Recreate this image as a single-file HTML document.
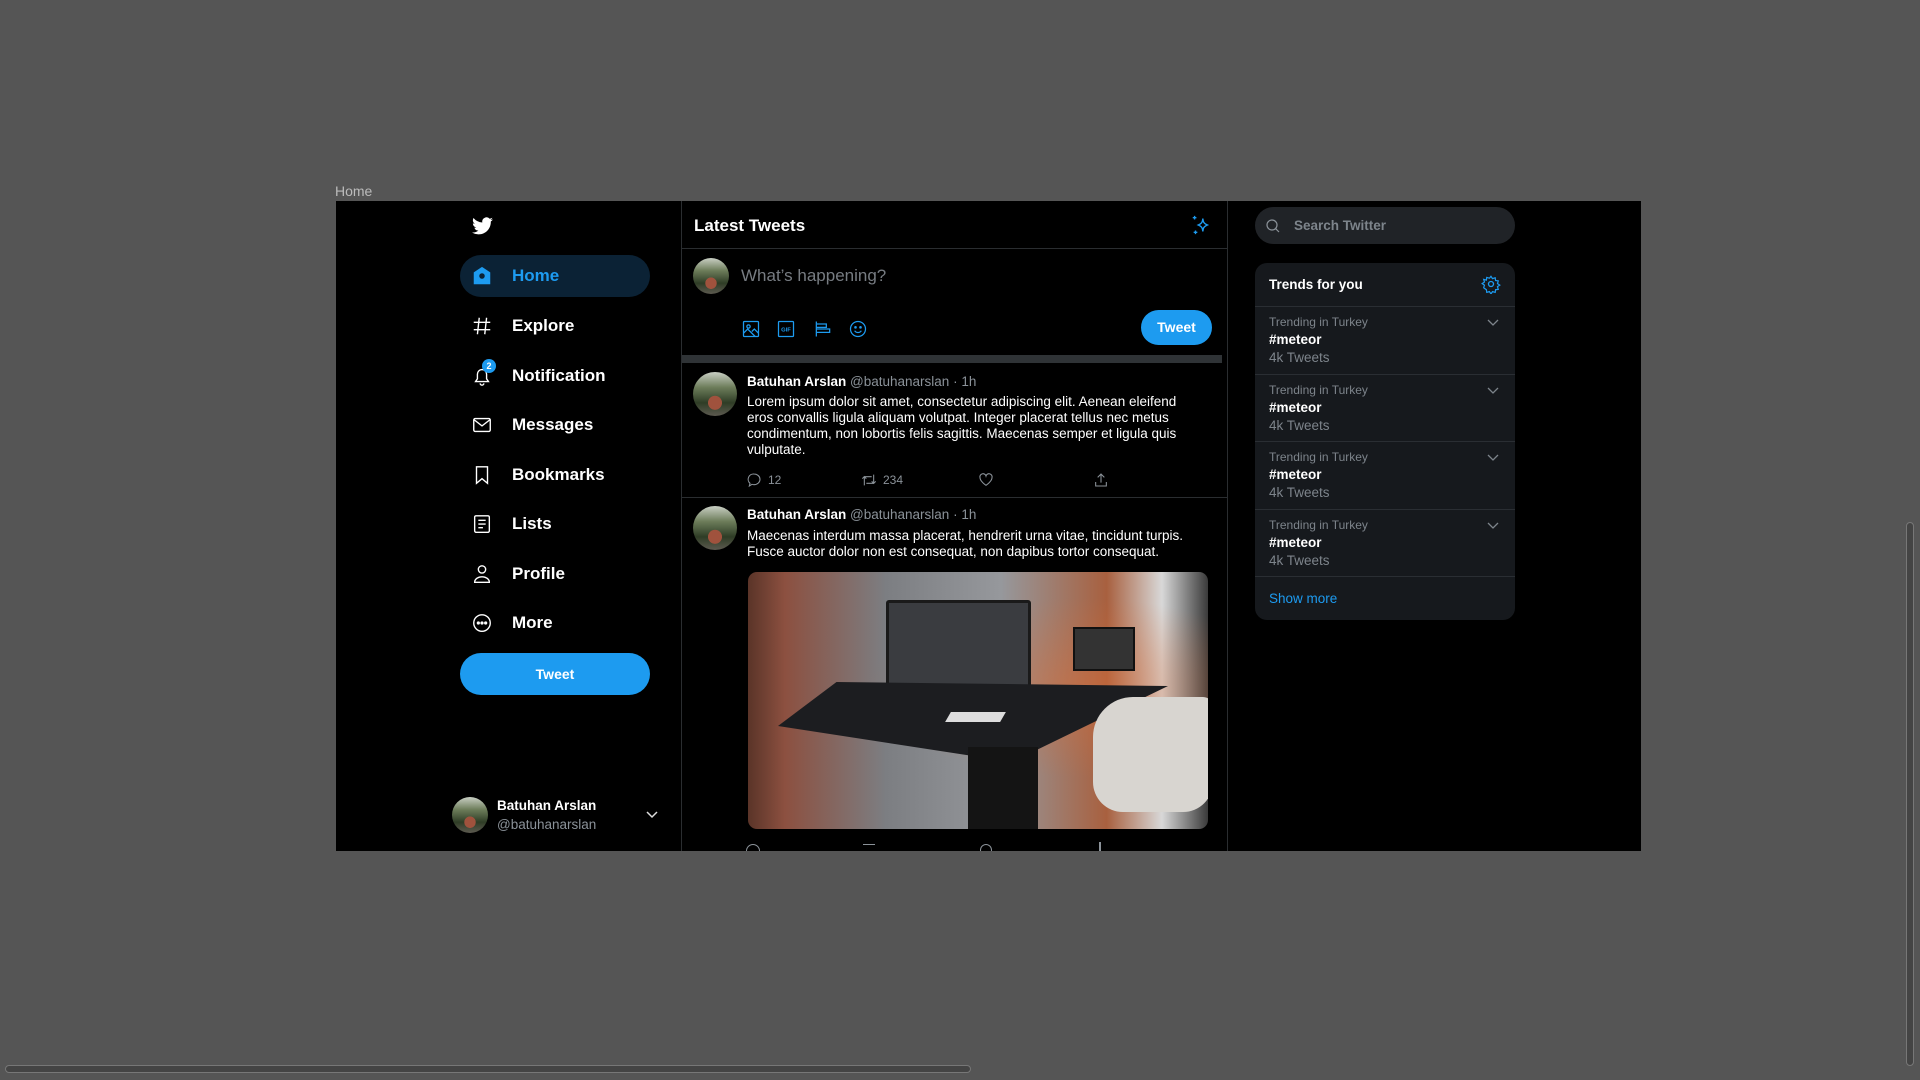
<!DOCTYPE html>
<html><head><meta charset="utf-8"><style>
*{box-sizing:border-box;margin:0;padding:0}
body{width:1920px;height:1080px;background:#555;font-family:"Liberation Sans",sans-serif;position:relative;overflow:hidden;color:#fff}
.abs{position:absolute}
.frame{left:336px;top:201px;width:1305px;height:650px;background:#000;overflow:hidden}
.nav{position:absolute;left:135px;height:40px;display:flex;align-items:center;font-weight:bold;font-size:17px}
.nav svg{position:absolute;left:0;width:22px;height:22px}
.nav span{position:absolute;left:41px;white-space:nowrap}
.av{border-radius:50%;background:radial-gradient(circle at 50% 70%,#a0523d 0 18%,transparent 19%),linear-gradient(#c9cfc4 0,#6d7d5a 35%,#2f3d26 70%,#5d5a50 100%)}
.gray{color:#8b9299}
.trend{position:absolute;left:0;width:260px;height:68px;border-top:1px solid #2a2e33}
.trend .a{position:absolute;left:14px;top:8px;font-size:12px;color:#7d848b}
.trend .b{position:absolute;left:14px;top:25px;font-size:13.5px;font-weight:bold}
.trend .c{position:absolute;left:14px;top:43px;font-size:13.5px;color:#7d848b}
.trend svg{position:absolute;right:16px;top:12px}
.act{position:absolute;font-size:12px;color:#8b9299;display:flex;align-items:center;gap:6px}
</style></head><body>
<div class="abs" style="left:335px;top:183px;font-size:14px;color:#bbb">Home</div>
<div class="abs frame">
 <div class="abs" style="left:345px;top:0;width:1px;height:650px;background:#2a2d30"></div>
 <svg class="abs" style="left:136px;top:16px" width="21" height="18" viewBox="0 0 24 20"><path fill="#fff" d="M24 2.4a9.8 9.8 0 0 1-2.8.8A4.9 4.9 0 0 0 23.3.5a9.9 9.9 0 0 1-3.1 1.2A4.9 4.9 0 0 0 11.8 6 14 14 0 0 1 1.7.9a4.9 4.9 0 0 0 1.5 6.6 4.9 4.9 0 0 1-2.2-.6 4.9 4.9 0 0 0 3.9 4.9 4.9 4.9 0 0 1-2.2.1 4.9 4.9 0 0 0 4.6 3.4A9.9 9.9 0 0 1 0 17.3 14 14 0 0 0 7.5 19.5c9 0 14-7.5 14-14v-.6A10 10 0 0 0 24 2.4z"/></svg>
 <div class="abs" style="left:124px;top:54px;width:190px;height:42px;border-radius:21px;background:#0b2235"></div>
 <div class="nav" style="top:55px;color:#1d9bf0"><svg viewBox="0 0 24 24"><path fill="#1d9bf0" d="M12 2 3 8v13h18V8z"/><circle cx="12" cy="12" r="3" fill="#0b2235"/></svg><span>Home</span></div>
 <div class="nav" style="top:105px"><svg viewBox="0 0 24 24" fill="none" stroke="#fff" stroke-width="1.5"><path d="M9 3 7 21M17 3l-2 18M3 8h18M3 16h18"/></svg><span>Explore</span></div>
 <div class="nav" style="top:155px"><svg viewBox="0 0 24 24" fill="none" stroke="#fff" stroke-width="1.5"><path d="M5 18h14l-2-3V10a5 5 0 0 0-10 0v5zM10 20a2 2 0 0 0 4 0"/></svg><span>Notification</span><div class="abs" style="left:11px;top:3px;width:14px;height:14px;border-radius:50%;background:#1d9bf0;font-size:9px;text-align:center;line-height:14px">2</div></div>
 <div class="nav" style="top:204px"><svg viewBox="0 0 24 24" fill="none" stroke="#fff" stroke-width="1.5"><rect x="3" y="5" width="18" height="14" rx="1.5"/><path d="m3 6 9 7 9-7"/></svg><span>Messages</span></div>
 <div class="nav" style="top:254px"><svg viewBox="0 0 24 24" fill="none" stroke="#fff" stroke-width="1.5"><path d="M6 3h12v18l-6-5-6 5z"/></svg><span>Bookmarks</span></div>
 <div class="nav" style="top:303px"><svg viewBox="0 0 24 24" fill="none" stroke="#fff" stroke-width="1.5"><rect x="4" y="3" width="16" height="18" rx="1.5"/><path d="M8 8h8M8 12h8M8 16h5"/></svg><span>Lists</span></div>
 <div class="nav" style="top:353px"><svg viewBox="0 0 24 24" fill="none" stroke="#fff" stroke-width="1.5"><circle cx="12" cy="7" r="4"/><path d="M4 21a8 6 0 0 1 16 0z"/></svg><span>Profile</span></div>
 <div class="nav" style="top:402px"><svg viewBox="0 0 24 24" fill="none" stroke="#fff" stroke-width="1.5"><circle cx="12" cy="12" r="9"/><circle cx="8" cy="12" r="1" fill="#fff"/><circle cx="12" cy="12" r="1" fill="#fff"/><circle cx="16" cy="12" r="1" fill="#fff"/></svg><span>More</span></div>
 <div class="abs" style="left:124px;top:452px;width:190px;height:42px;border-radius:21px;background:#1d9bf0;font-weight:bold;font-size:14px;text-align:center;line-height:42px">Tweet</div>
 <div class="abs av" style="left:116px;top:596px;width:36px;height:36px"></div>
 <div class="abs" style="left:161px;top:597px;font-size:13.5px;font-weight:bold">Batuhan Arslan</div>
 <div class="abs gray" style="left:161px;top:616px;font-size:13.5px">@batuhanarslan</div>
 <svg class="abs" style="left:310px;top:610px" width="12" height="8" viewBox="0 0 12 8"><path d="m1 1 5 5 5-5" fill="none" stroke="#ddd" stroke-width="1.5"/></svg>

 <div class="abs" style="left:891px;top:0;width:1px;height:650px;background:#2a2d30"></div>
 <div class="abs" style="left:358px;top:15px;font-size:17px;font-weight:bold">Latest Tweets</div>
 <svg class="abs" style="left:854px;top:12px" width="22" height="24" viewBox="0 0 24 24" fill="none" stroke="#1d9bf0" stroke-width="1.5"><path d="M14 5c.5 4.5 1.5 5.5 5 7-3.5 1.5-4.5 2.5-5 7-.5-4.5-1.5-5.5-5-7 3.5-1.5 4.5-2.5 5-7zM5 2v4M3 4h4M6 18v4M4 20h4"/></svg>
 <div class="abs" style="left:345px;top:47px;width:546px;height:1px;background:#2a2d30"></div>
 <div class="abs av" style="left:357px;top:57px;width:36px;height:36px"></div>
 <div class="abs" style="left:405px;top:65px;font-size:17px;color:#777c82">What’s happening?</div>
 <svg class="abs" style="left:405px;top:118px" width="20" height="20" viewBox="0 0 24 24" fill="none" stroke="#1d9bf0" stroke-width="1.5"><rect x="3" y="3" width="18" height="18" rx="1"/><circle cx="9" cy="9" r="2"/><path d="m3 17 5-5 9 9M13 15l3-3 5 5"/></svg>
 <svg class="abs" style="left:440px;top:118px" width="20" height="20" viewBox="0 0 24 24"><rect x="3" y="3" width="18" height="18" rx="1" fill="none" stroke="#1d9bf0" stroke-width="1.5"/><text x="12" y="15" text-anchor="middle" font-size="7" font-weight="bold" fill="#1d9bf0" font-family="Liberation Sans">GIF</text></svg>
 <svg class="abs" style="left:477px;top:118px" width="20" height="20" viewBox="0 0 24 24" fill="none" stroke="#1d9bf0" stroke-width="1.5"><path d="M4 3v18M4 6h12v4H4M4 12h16v4H4"/></svg>
 <svg class="abs" style="left:512px;top:118px" width="20" height="20" viewBox="0 0 24 24" fill="none" stroke="#1d9bf0" stroke-width="1.5"><circle cx="12" cy="12" r="9"/><circle cx="9" cy="10" r=".8" fill="#1d9bf0"/><circle cx="15" cy="10" r=".8" fill="#1d9bf0"/><path d="M8 14c2 3 6 3 8 0"/></svg>
 <div class="abs" style="left:805px;top:109px;width:71px;height:35px;border-radius:18px;background:#1d9bf0;font-weight:bold;font-size:14px;text-align:center;line-height:35px">Tweet</div>
 <div class="abs" style="left:346px;top:154px;width:540px;height:8px;background:#2f3336"></div>
 <div class="abs av" style="left:357px;top:171px;width:44px;height:44px"></div>
 <div class="abs" style="left:411px;top:173px;font-size:13.5px;white-space:nowrap"><b>Batuhan Arslan</b> <span class="gray">@batuhanarslan · 1h</span></div>
 <div class="abs" style="left:411px;top:193px;width:445px;font-size:13.5px;line-height:16px">Lorem ipsum dolor sit amet, consectetur adipiscing elit. Aenean eleifend eros convallis ligula aliquam volutpat. Integer placerat tellus nec metus condimentum, non lobortis felis sagittis. Maecenas semper et ligula quis vulputate.</div>
 <div class="act" style="left:410px;top:271px"><svg width="16" height="16" viewBox="0 0 24 24" fill="none" stroke="#8b9299" stroke-width="1.6"><path d="M12 3a9 8 0 0 1 0 16c-1 0-2 0-3-.5L5 21l1-4a8 8 0 0 1 6-14z"/></svg>12</div>
 <div class="act" style="left:525px;top:271px"><svg width="16" height="16" viewBox="0 0 24 24" fill="none" stroke="#8b9299" stroke-width="1.6"><path d="M5 20V7h11M2 10l3-3 3 3M19 4v13H8M22 14l-3 3-3-3"/></svg>234</div>
 <div class="act" style="left:642px;top:271px"><svg width="16" height="16" viewBox="0 0 24 24" fill="none" stroke="#8b9299" stroke-width="1.6"><path d="M12 20S3 14 3 8.5A4.5 4.5 0 0 1 12 6a4.5 4.5 0 0 1 9 2.5C21 14 12 20 12 20z"/></svg></div>
 <div class="act" style="left:757px;top:271px"><svg width="16" height="16" viewBox="0 0 24 24" fill="none" stroke="#8b9299" stroke-width="1.6"><path d="M12 3v13M7 8l5-5 5 5M4 15v6h16v-6"/></svg></div>
 <div class="abs" style="left:345px;top:296px;width:546px;height:1px;background:#2a2d30"></div>
 <div class="abs av" style="left:357px;top:305px;width:44px;height:44px"></div>
 <div class="abs" style="left:411px;top:306px;font-size:13.5px;white-space:nowrap"><b>Batuhan Arslan</b> <span class="gray">@batuhanarslan · 1h</span></div>
 <div class="abs" style="left:411px;top:327px;width:470px;font-size:13.5px;line-height:16px">Maecenas interdum massa placerat, hendrerit urna vitae, tincidunt turpis. Fusce auctor dolor non est consequat, non dapibus tortor consequat.</div>
 <div class="abs" style="left:412px;top:371px;width:460px;height:257px;border-radius:9px;overflow:hidden;background:linear-gradient(90deg,#5a3428 0,#8c5040 8%,#7c7e82 30%,#96989c 55%,#a8603f 78%,#d8d8d8 90%,#3a3a3a 100%)">
  <div class="abs" style="left:0;top:0;width:100%;height:100%;background:radial-gradient(ellipse at 72% 45%,rgba(220,110,55,.45),transparent 45%)"></div>
  <div class="abs" style="left:138px;top:28px;width:145px;height:100px;background:#3a3c40;border:3px solid #1a1a1a;border-radius:3px"></div>
  <div class="abs" style="left:325px;top:55px;width:62px;height:44px;background:#333;border:2px solid #111"></div>
  <div class="abs" style="left:30px;top:110px;width:390px;height:80px;background:#1c1d20;clip-path:polygon(15% 0,100% 5%,60% 100%,0 55%)"></div>
  <div class="abs" style="left:220px;top:175px;width:70px;height:82px;background:#141414"></div>
  <div class="abs" style="left:345px;top:125px;width:120px;height:115px;background:#d8d5d0;border-radius:40px 10px 30px 30px"></div>
  <div class="abs" style="left:200px;top:140px;width:55px;height:10px;background:#ddd;transform:skewX(-30deg)"></div>
 </div>
 <div class="abs" style="left:410px;top:643px;width:14px;height:14px;border:1.5px solid #8b9299;border-radius:50%"></div>
 <div class="abs" style="left:527px;top:643px;width:12px;height:12px;border-top:1.5px solid #8b9299"></div>
 <div class="abs" style="left:644px;top:643px;width:12px;height:12px;border:1.5px solid #8b9299;border-radius:50%"></div>
 <div class="abs" style="left:763px;top:641px;width:2px;height:12px;background:#8b9299"></div>

 <div class="abs" style="left:919px;top:6px;width:260px;height:37px;border-radius:19px;background:#202327"></div>
 <svg class="abs" style="left:929px;top:17px" width="16" height="16" viewBox="0 0 24 24" fill="none" stroke="#8b9299" stroke-width="1.8"><circle cx="10.5" cy="10.5" r="7.5"/><path d="m16 16 5 5"/></svg>
 <div class="abs" style="left:958px;top:17px;font-size:13.5px;font-weight:bold;color:#7d848b">Search Twitter</div>
 <div class="abs" style="left:919px;top:62px;width:260px;height:357px;border-radius:12px;background:#16191d;overflow:hidden">
  <div class="abs" style="left:14px;top:14px;font-size:13.5px;font-weight:bold">Trends for you</div>
  <svg class="abs" style="left:226px;top:11px" width="20" height="20" viewBox="0 0 24 24" fill="none" stroke="#1d9bf0" stroke-width="1.6"><circle cx="12" cy="12" r="3"/><path d="M12 2l2 3 3.5-1 .5 3.5 3.5.5-1 3.5 3 2-3 2 1 3.5-3.5.5-.5 3.5-3.5-1-2 3-2-3-3.5 1-.5-3.5L2.5 17l1-3.5-3-2 3-2-1-3.5L6 7l.5-3.5L10 4.5z" transform="scale(.92) translate(1 1)"/></svg>
  <div class="trend" style="top:43px"><div class="a">Trending in Turkey</div><div class="b">#meteor</div><div class="c">4k Tweets</div><svg width="12" height="8" viewBox="0 0 12 8"><path d="m1 1 5 5 5-5" fill="none" stroke="#7d848b" stroke-width="1.3"/></svg></div>
  <div class="trend" style="top:111px"><div class="a">Trending in Turkey</div><div class="b">#meteor</div><div class="c">4k Tweets</div><svg width="12" height="8" viewBox="0 0 12 8"><path d="m1 1 5 5 5-5" fill="none" stroke="#7d848b" stroke-width="1.3"/></svg></div>
  <div class="trend" style="top:178px"><div class="a">Trending in Turkey</div><div class="b">#meteor</div><div class="c">4k Tweets</div><svg width="12" height="8" viewBox="0 0 12 8"><path d="m1 1 5 5 5-5" fill="none" stroke="#7d848b" stroke-width="1.3"/></svg></div>
  <div class="trend" style="top:246px"><div class="a">Trending in Turkey</div><div class="b">#meteor</div><div class="c">4k Tweets</div><svg width="12" height="8" viewBox="0 0 12 8"><path d="m1 1 5 5 5-5" fill="none" stroke="#7d848b" stroke-width="1.3"/></svg></div>
  <div class="abs" style="left:0;top:313px;width:260px;height:1px;background:#2a2e33"></div>
  <div class="abs" style="left:14px;top:328px;font-size:13.5px;color:#1d9bf0">Show more</div>
 </div>
</div>
<div class="abs" style="left:1906px;top:522px;width:8px;height:544px;border-radius:4px;background:#444;border:1px solid #777"></div>
<div class="abs" style="left:5px;top:1065px;width:966px;height:8px;border-radius:4px;background:#444;border:1px solid #777"></div>
</body></html>
